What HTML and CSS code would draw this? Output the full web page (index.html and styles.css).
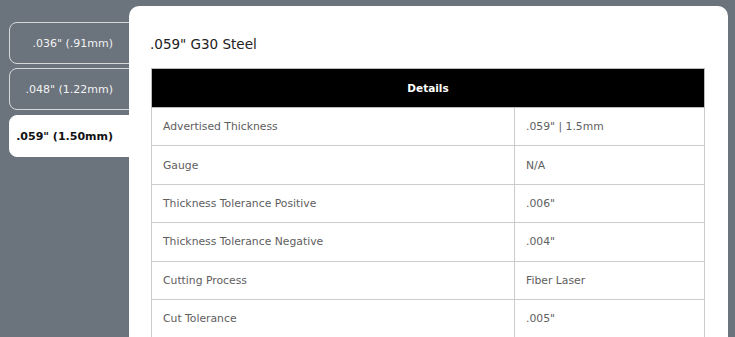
FILE: index.html
```html
<!DOCTYPE html>
<html lang="en">
<head>
  <meta charset="UTF-8" />
  <title>G30 Steel</title>
  <link rel="stylesheet" href="styles.css">
</head>
<body>

<div class="pagina">
  <nav class="tabs">
    <div class="tab">.036" (.91mm)</div>
    <div class="tab">.048" (1.22mm)</div>
    <div class="tab activa">.059" (1.50mm)</div>
  </nav>

  <main class="panel">
    <h2>.059" G30 Steel</h2>
    <table>
      <thead>
        <tr><th colspan="2">Details</th></tr>
      </thead>
      <tbody>
        <tr><td>Advertised Thickness</td><td>.059" | 1.5mm</td></tr>
        <tr><td>Gauge</td><td>N/A</td></tr>
        <tr><td>Thickness Tolerance Positive</td><td>.006"</td></tr>
        <tr><td>Thickness Tolerance Negative</td><td>.004"</td></tr>
        <tr><td>Cutting Process</td><td>Fiber Laser</td></tr>
        <tr><td>Cut Tolerance</td><td>.005"</td></tr>
      </tbody>
    </table>
  </main>
</div>

</body>
</html>
```

FILE: styles.css
```css
* { box-sizing: border-box; }

html, body {
  height: 100%;
}

body {
  margin: 0;
  font-family: 'DejaVu Sans', sans-serif;
  background: #6b737d;
  color: #5e5e5e;
  overflow: hidden;
}

.pagina {
  display: flex;
  height: 100%;
  padding: 6px 7px 0 9px;
}

.tabs {
  width: 120px;
  flex-shrink: 0;
  padding-top: 16px;
  display: flex;
  flex-direction: column;
  gap: 4px;
}

.tab {
  width: 140px;
  height: 42px;
  display: flex;
  align-items: center;
  justify-content: flex-end;
  padding-right: 35px;
  border: 1px solid #d6d9dc;
  border-radius: 8px;
  color: #f2f2f2;
  font-size: 11px;
}

.tab.activa {
  background: white;
  border-color: white;
  color: #111;
  font-weight: bold;
  margin-top: 1px;
}

.panel {
  position: relative;
  flex: 1;
  background: white;
  border-radius: 10px 10px 0 0;
  padding: 30px 22px 0 21px;
  overflow: hidden;
}

h2 {
  margin: 0 0 16px;
  font-size: 13.5px;
  font-weight: normal;
  color: #222;
}

table {
  width: 554px;
  margin-left: 1px;
  border-collapse: collapse;
  font-size: 10.8px;
}

th {
  background: black;
  color: white;
  height: 39px;
  font-size: 10.5px;
  border: 1px solid #bbb;
}

td {
  height: 38.4px;
  padding: 0 11px;
  border: 1px solid #ccc;
}

td:first-child {
  width: 363px;
}
```
